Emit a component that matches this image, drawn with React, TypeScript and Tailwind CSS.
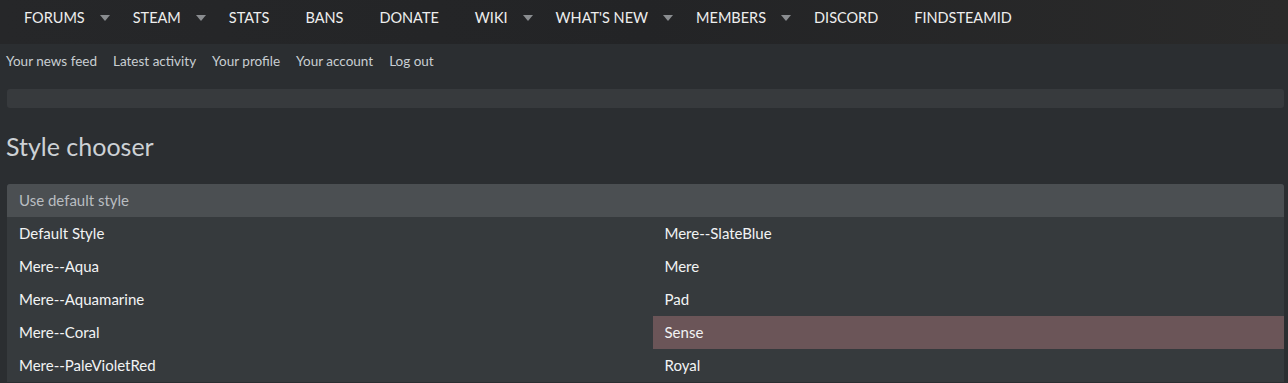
const navItems = [
  { label: "FORUMS", caret: true },
  { label: "STEAM", caret: true },
  { label: "STATS", caret: false },
  { label: "BANS", caret: false },
  { label: "DONATE", caret: false },
  { label: "WIKI", caret: true },
  { label: "WHAT'S NEW", caret: true },
  { label: "MEMBERS", caret: true },
  { label: "DISCORD", caret: false },
  { label: "FINDSTEAMID", caret: false },
];

const subLinks = [
  "Your news feed",
  "Latest activity",
  "Your profile",
  "Your account",
  "Log out",
];

const leftStyles = [
  "Default Style",
  "Mere--Aqua",
  "Mere--Aquamarine",
  "Mere--Coral",
  "Mere--PaleVioletRed",
];
const rightStyles = ["Mere--SlateBlue", "Mere", "Pad", "Sense", "Royal"];

function Caret() {
  return (
    <svg width="10" height="6" viewBox="0 0 10 6" className="ml-[15px]">
      <path d="M0 0h10L5 6z" fill="#8a8d90" />
    </svg>
  );
}

export default function App() {
  return (
    <div
      className="min-h-screen bg-[#2b2e31] text-white"
      style={{ fontFamily: "Lato, 'Open Sans', sans-serif" }}
    >
      {/* top nav */}
      <nav className="h-[44px] bg-gradient-to-r from-[#262729] via-[#232426] to-[#2a2a2a] flex items-center pl-[6px]">
        {navItems.map((item) => (
          <div
            key={item.label}
            className={`flex items-center pl-[18px] text-[14.5px] text-[#eeeeee] pb-[8px] ${
              item.caret ? "pr-[5px]" : "pr-[18px]"
            }`}
          >
            <span>{item.label}</span>
            {item.caret && <Caret />}
          </div>
        ))}
      </nav>

      {/* sub nav */}
      <div className="h-[34px] flex items-center gap-[16px] px-[6px] pt-[1px] text-[13.5px] text-[#c9ced3]">
        {subLinks.map((l) => (
          <span key={l}>{l}</span>
        ))}
      </div>

      <div className="pl-[7px] pr-[4px] pt-[11px]">
        {/* breadcrumb bar */}
        <div className="h-[19px] rounded-[3px] bg-[#373a3d]" />

        <h1 className="mt-[23px] -ml-[1px] text-[25px] leading-[30px] text-[#cdd1d5]">
          Style chooser
        </h1>

        {/* style block */}
        <div className="mt-[23px] rounded-t-[3px] overflow-hidden bg-[#363a3d]">
          <div className="h-[33px] flex items-center px-[12px] bg-[#4b4f52] text-[15px] text-[#b9bdc1]">
            Use default style
          </div>
          <div className="grid grid-cols-2">
            <div className="flex flex-col">
              {leftStyles.map((s) => (
                <div
                  key={s}
                  className="h-[33px] flex items-center px-[12px] text-[15px] text-[#f2f3f4]"
                >
                  {s}
                </div>
              ))}
            </div>
            <div className="flex flex-col pl-[7px]">
              {rightStyles.map((s) => (
                <div
                  key={s}
                  className={`h-[33px] flex items-center px-[12px] text-[15px] text-[#f2f3f4] ${
                    s === "Sense" ? "bg-[#6b5558]" : ""
                  }`}
                >
                  {s}
                </div>
              ))}
            </div>
          </div>
        </div>
      </div>
    </div>
  );
}
